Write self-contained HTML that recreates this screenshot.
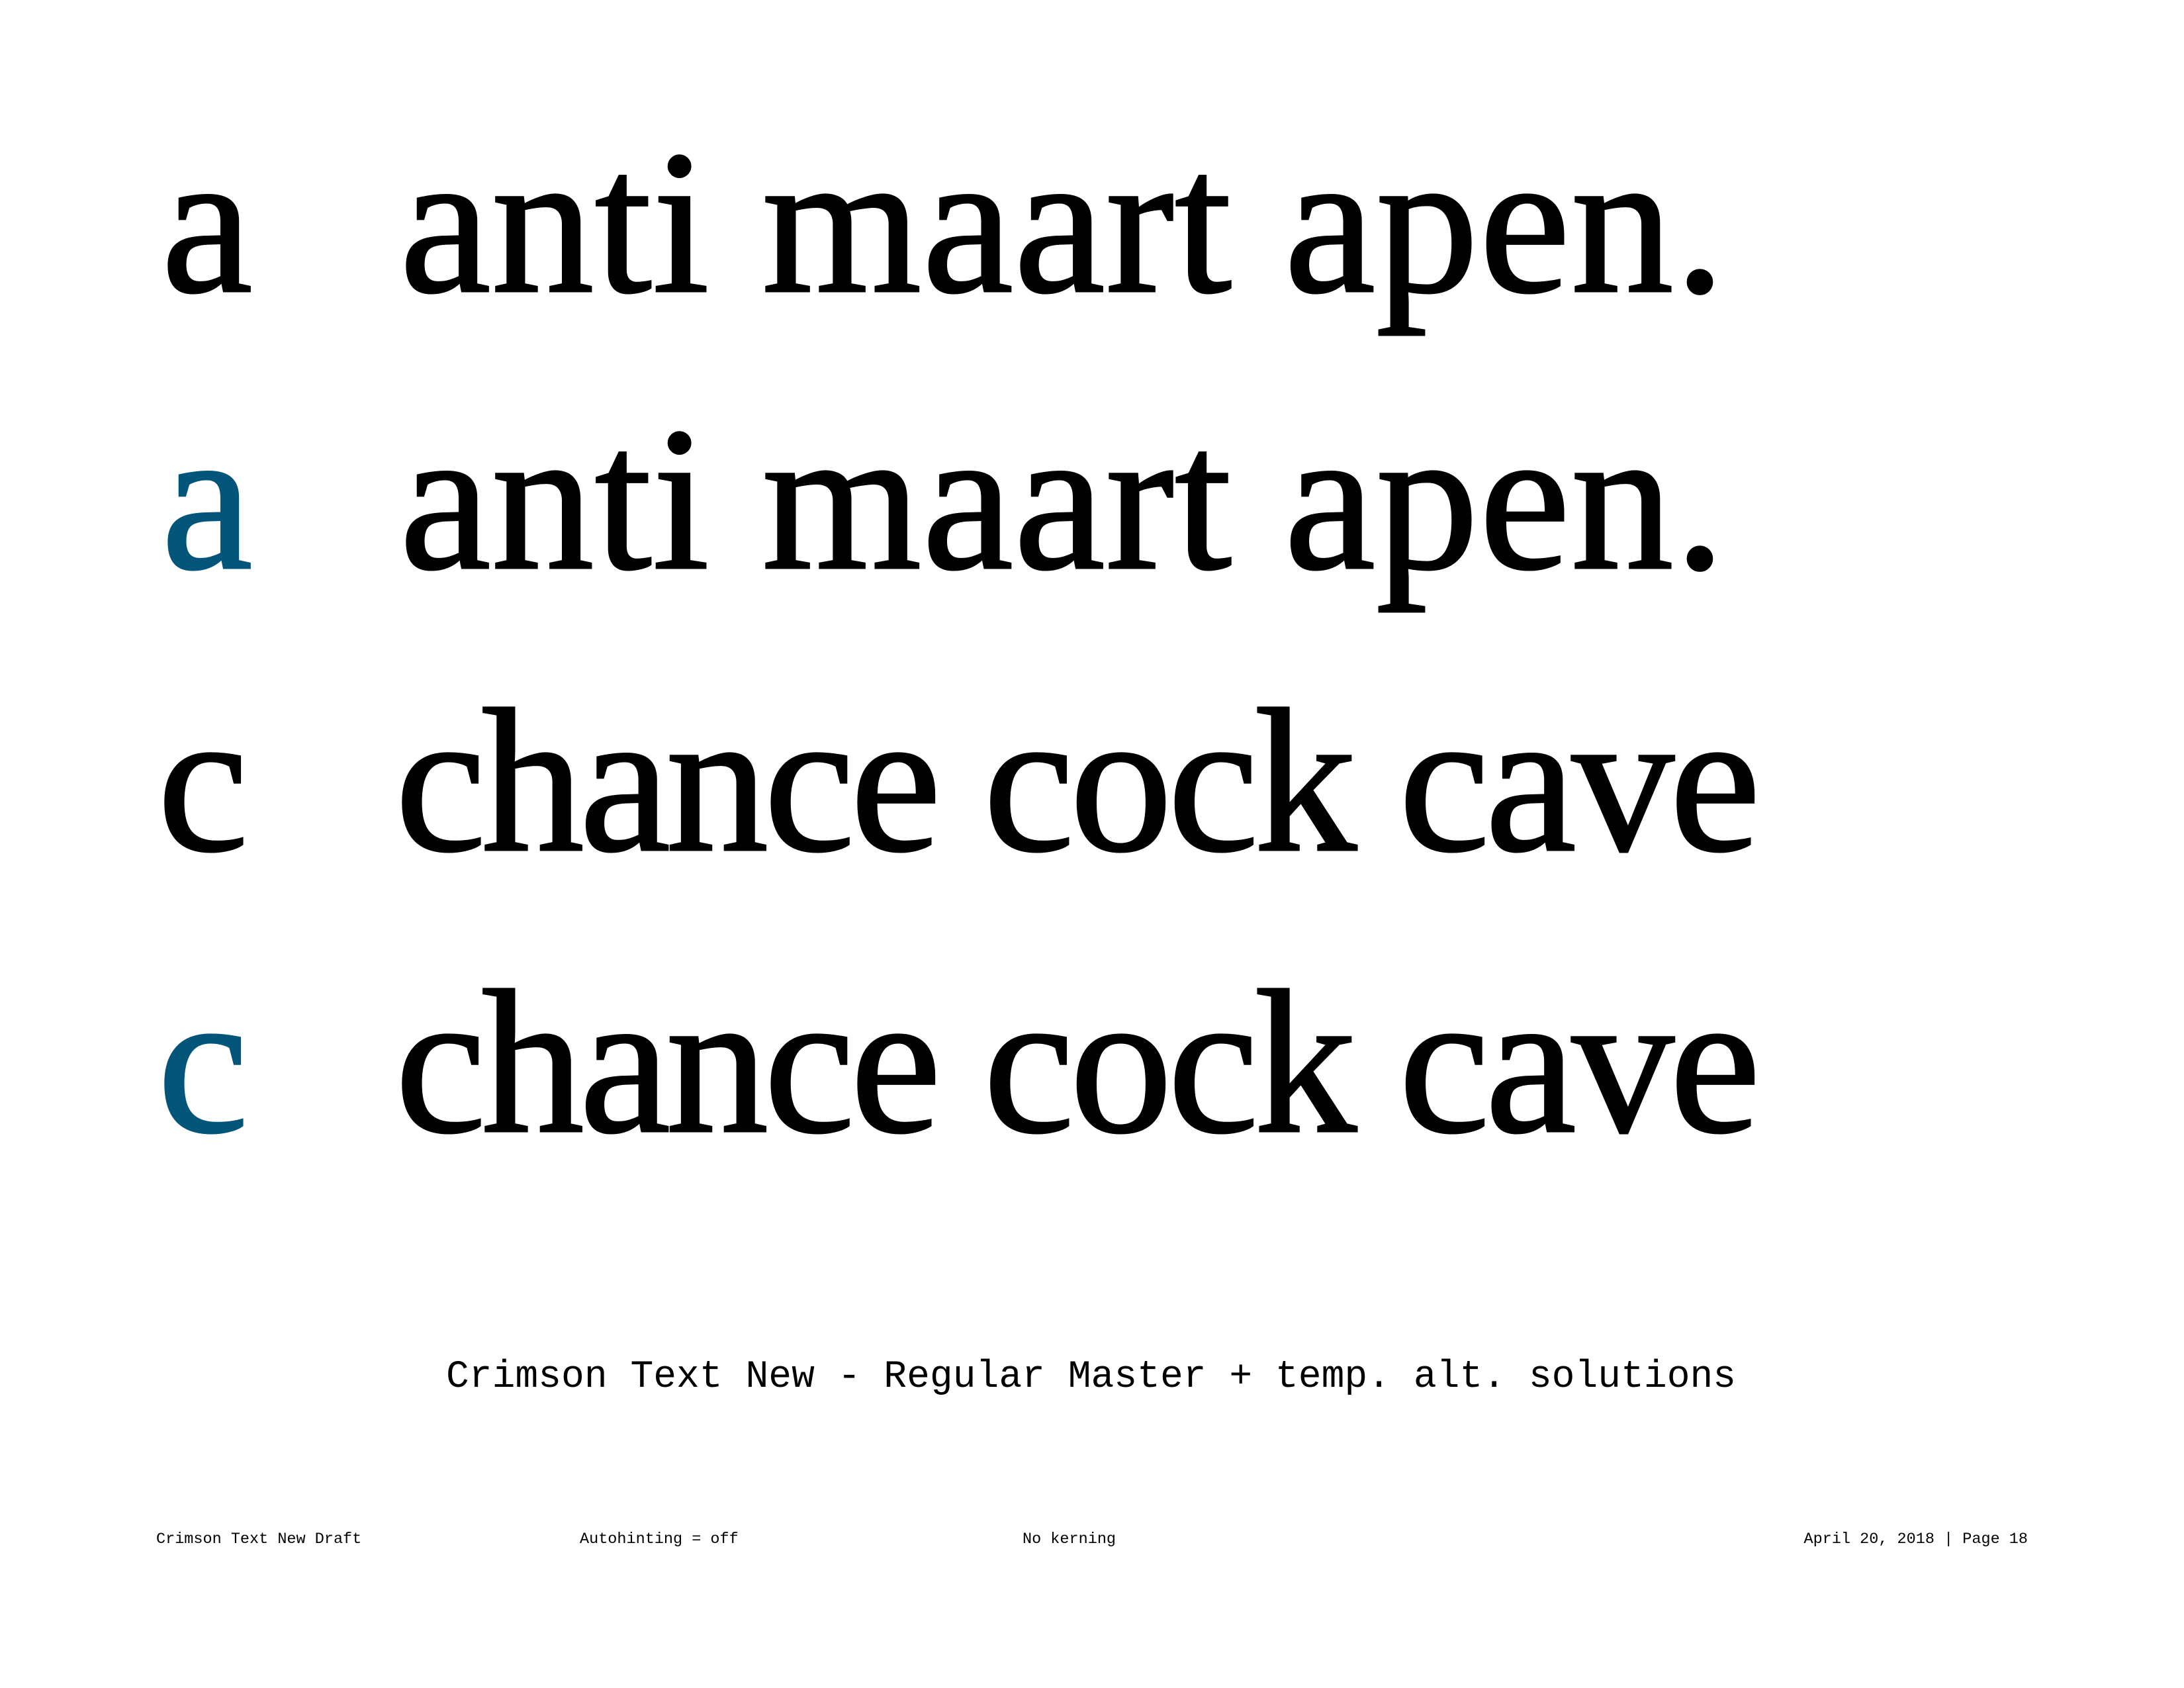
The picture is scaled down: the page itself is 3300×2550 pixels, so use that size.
<!DOCTYPE html>
<html><head><meta charset="utf-8"><style>
html,body{margin:0;padding:0;background:#fff;}
body{width:3300px;height:2550px;position:relative;overflow:hidden;}
.r{position:absolute;font-family:"Liberation Serif",serif;font-size:310px;line-height:1;color:#000;white-space:pre;-webkit-text-stroke:3px #000;}
.b{color:#03557a;-webkit-text-stroke:3px #03557a;}
.m{position:absolute;font-family:"Liberation Mono",monospace;white-space:pre;color:#000;line-height:1;}
</style></head><body>
<div class="r" style="left:244px;top:182px;">a</div>
<div class="r" style="left:604px;top:182px;letter-spacing:1px;">anti maart apen.</div>
<div class="r b" style="left:244px;top:600px;">a</div>
<div class="r" style="left:604px;top:600px;letter-spacing:1px;">anti maart apen.</div>
<div class="r" style="left:238px;top:1026px;">c</div>
<div class="r" style="left:597px;top:1026px;letter-spacing:-7px;">chance cock cave</div>
<div class="r b" style="left:238px;top:1451px;">c</div>
<div class="r" style="left:597px;top:1451px;letter-spacing:-7px;">chance cock cave</div>
<div class="m" style="left:674px;top:2052px;font-size:58px;">Crimson Text New - Regular Master + temp. alt. solutions</div>
<div class="m" style="left:236px;top:2314px;font-size:23.5px;">Crimson Text New Draft</div>
<div class="m" style="left:876px;top:2314px;font-size:23.5px;">Autohinting = off</div>
<div class="m" style="left:1545px;top:2314px;font-size:23.5px;">No kerning</div>
<div class="m" style="right:236px;top:2314px;font-size:23.5px;">April 20, 2018 | Page 18</div>
</body></html>
